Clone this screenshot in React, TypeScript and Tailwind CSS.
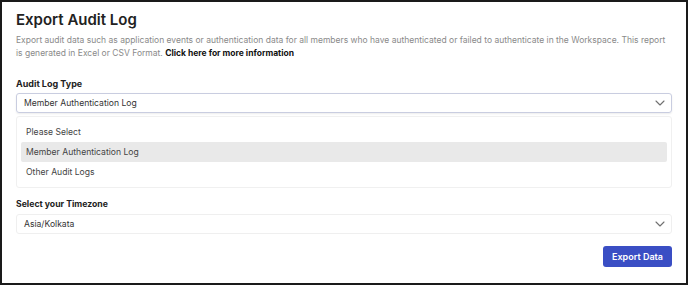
import React from "react";

const Chevron = () => (
  <svg width="10" height="6" viewBox="0 0 10 6" fill="none" className="shrink-0">
    <path d="M1 1l4 4 4-4" stroke="#707070" strokeWidth="1.1" strokeLinecap="round" strokeLinejoin="round" />
  </svg>
);

export default function App() {
  return (
    <div
      className="w-[688px] h-[285px] border-2 border-[#1a1a1a] bg-white flex flex-col px-[14px] text-[#222]"
      style={{ fontFamily: "Inter, 'Noto Sans', sans-serif" }}
    >
      <h1 className="text-[15px] font-semibold leading-[20px] mt-[8px] text-[#222]">Export Audit Log</h1>
      <p className="text-[8.5px] leading-[13px] text-[#8a8a8a] mt-[4px] -mr-[2px]">
        Export audit data such as application events or authentication data for all members who have authenticated or failed to authenticate in the Workspace. This report is generated in Excel or CSV Format.{" "}
        <span className="font-bold text-[#111]">Click here for more information</span>
      </p>

      <div className="text-[9px] font-bold leading-[12px] mt-[18px] text-[#222]">Audit Log Type</div>
      <div className="mt-[3px] h-[20px] border border-[#c9cde0] rounded-[3px] shadow-[0_1px_2px_rgba(0,0,0,0.08)] flex items-center justify-between pl-[7px] pr-[6px]">
        <span className="text-[8.6px] text-[#333]">Member Authentication Log</span>
        <Chevron />
      </div>
      <div className="mt-[3px] border border-[#f0f0f0] rounded-[3px] px-[4px] py-[5px] flex flex-col">
        <div className="h-[20px] flex items-center pl-[5px] text-[8.6px] text-[#444]">Please Select</div>
        <div className="h-[20px] flex items-center pl-[5px] text-[8.6px] text-[#444] bg-[#e9e9e9] rounded-[2px]">Member Authentication Log</div>
        <div className="h-[20px] flex items-center pl-[5px] text-[8.6px] text-[#444]">Other Audit Logs</div>
      </div>

      <div className="text-[8.7px] font-bold leading-[12px] mt-[10px] text-[#222]">Select your Timezone</div>
      <div className="mt-[4px] h-[20px] border border-[#efefef] rounded-[3px] flex items-center justify-between pl-[7px] pr-[6px]">
        <span className="text-[8.6px] text-[#333]">Asia/Kolkata</span>
        <Chevron />
      </div>

      <div className="flex justify-end mt-[12px]">
        <button className="h-[21px] w-[69px] bg-[#3a4ec4] rounded-[3px] text-white text-[9px] font-semibold flex items-center justify-center">
          Export Data
        </button>
      </div>
    </div>
  );
}
